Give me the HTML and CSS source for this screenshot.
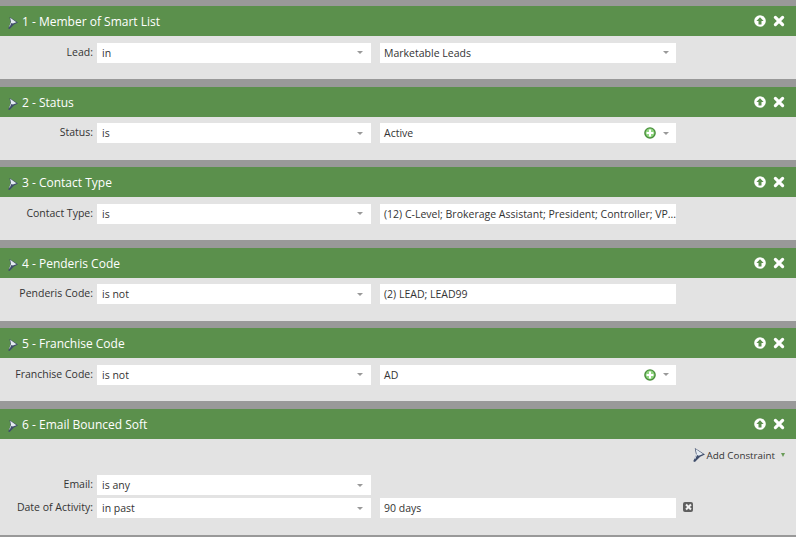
FILE: index.html
```html
<!DOCTYPE html>
<html lang="en">
<head>
    <meta charset="UTF-8">
    <meta name="viewport" content="width=device-width, initial-scale=1.0">
    <title>Smart List Filters</title>
    <link rel="stylesheet" href="styles.css">
</head>
<body>
    <svg class="defs" width="0" height="0">
        <symbol id="wand" viewBox="0 0 10 12" preserveAspectRatio="none">
            <path d="M1.5 0 L10 5.5 L6 7.5 L1.6 12 L0.2 11.4 L2.6 6 Z" fill="#3f4d6b"/>
            <path d="M2.2 0.8 L8.4 5.2 L4.8 6.6 L3.4 6 L1.8 9.6 L1.2 9.4 L3 5 Z" fill="#e4ebf2"/>
        </symbol>
        <symbol id="up" viewBox="0 0 12 12">
            <circle cx="6" cy="6" r="5.8" fill="#fff"/>
            <path d="M6 2.2 L9.6 6 H7.5 V9.6 H4.5 V6 H2.4 Z" fill="#5b904c"/>
        </symbol>
        <symbol id="close" viewBox="0 0 12 12">
            <path d="M2.4 2.4 L9.6 9.6 M9.6 2.4 L2.4 9.6" stroke="#fff" stroke-width="3.2" stroke-linecap="round"/>
        </symbol>
        <symbol id="plus" viewBox="0 0 12 12">
            <circle cx="6" cy="6" r="5.8" fill="#4a8f3c"/>
            <circle cx="6" cy="5.8" r="4.4" fill="#93d883"/>
            <path d="M6 2.6 V9.4 M2.6 6 H9.4" stroke="#fff" stroke-width="2"/>
        </symbol>
    </svg>

    <section class="panel">
        <header class="panel-head">
            <svg class="wand"><use href="#wand"/></svg>
            <span class="panel-title">1 - Member of Smart List</span>
            <svg class="head-icon"><use href="#up"/></svg>
            <svg class="head-icon"><use href="#close"/></svg>
        </header>
        <div class="panel-body">
            <div class="row">
                <label class="row-label">Lead:</label>
                <div class="field op"><span class="value">in</span><i class="arrow"></i></div>
                <div class="field val"><span class="value">Marketable Leads</span><i class="arrow"></i></div>
            </div>
        </div>
    </section>

    <section class="panel">
        <header class="panel-head">
            <svg class="wand"><use href="#wand"/></svg>
            <span class="panel-title">2 - Status</span>
            <svg class="head-icon"><use href="#up"/></svg>
            <svg class="head-icon"><use href="#close"/></svg>
        </header>
        <div class="panel-body">
            <div class="row">
                <label class="row-label">Status:</label>
                <div class="field op"><span class="value">is</span><i class="arrow"></i></div>
                <div class="field val"><span class="value">Active</span><svg class="plus"><use href="#plus"/></svg><i class="arrow"></i></div>
            </div>
        </div>
    </section>

    <section class="panel">
        <header class="panel-head">
            <svg class="wand"><use href="#wand"/></svg>
            <span class="panel-title">3 - Contact Type</span>
            <svg class="head-icon"><use href="#up"/></svg>
            <svg class="head-icon"><use href="#close"/></svg>
        </header>
        <div class="panel-body">
            <div class="row">
                <label class="row-label">Contact Type:</label>
                <div class="field op"><span class="value">is</span><i class="arrow"></i></div>
                <div class="field val"><span class="value">(12) C-Level; Brokerage Assistant; President; Controller; VP...</span></div>
            </div>
        </div>
    </section>

    <section class="panel">
        <header class="panel-head">
            <svg class="wand"><use href="#wand"/></svg>
            <span class="panel-title">4 - Penderis Code</span>
            <svg class="head-icon"><use href="#up"/></svg>
            <svg class="head-icon"><use href="#close"/></svg>
        </header>
        <div class="panel-body">
            <div class="row">
                <label class="row-label">Penderis Code:</label>
                <div class="field op"><span class="value">is not</span><i class="arrow"></i></div>
                <div class="field val"><span class="value">(2) LEAD; LEAD99</span></div>
            </div>
        </div>
    </section>

    <section class="panel">
        <header class="panel-head">
            <svg class="wand"><use href="#wand"/></svg>
            <span class="panel-title">5 - Franchise Code</span>
            <svg class="head-icon"><use href="#up"/></svg>
            <svg class="head-icon"><use href="#close"/></svg>
        </header>
        <div class="panel-body">
            <div class="row">
                <label class="row-label">Franchise Code:</label>
                <div class="field op"><span class="value">is not</span><i class="arrow"></i></div>
                <div class="field val"><span class="value">AD</span><svg class="plus"><use href="#plus"/></svg><i class="arrow"></i></div>
            </div>
        </div>
    </section>

    <section class="panel last">
        <header class="panel-head">
            <svg class="wand"><use href="#wand"/></svg>
            <span class="panel-title">6 - Email Bounced Soft</span>
            <svg class="head-icon"><use href="#up"/></svg>
            <svg class="head-icon"><use href="#close"/></svg>
        </header>
        <div class="panel-body">
            <div class="constraint">
                <svg class="wand-small"><use href="#wand"/></svg>
                <span>Add Constraint</span>
                <i class="arrow-green"></i>
            </div>
            <div class="row">
                <label class="row-label">Email:</label>
                <div class="field op"><span class="value">is any</span><i class="arrow"></i></div>
            </div>
            <div class="row">
                <label class="row-label">Date of Activity:</label>
                <div class="field op"><span class="value">in past</span><i class="arrow"></i></div>
                <div class="field val"><span class="value">90 days</span></div>
                <span class="remove"></span>
            </div>
        </div>
    </section>
</body>
</html>
```

FILE: styles.css
```css
html, body { margin: 0; padding: 0; }
body { width: 796px; height: 537px; overflow: hidden; background: #999; padding-top: 6.4px; box-sizing: border-box;
       font-family: "Open Sans", sans-serif; font-size: 10.5px; color: #333; }
.defs { display: block; height: 0; }

.panel { margin-bottom: 7.5px; }
.panel-head { display: flex; align-items: center; height: 30px; padding: 0 11px 0 8px; background: #5b904c; color: #fff; }
.wand { width: 10px; height: 12px; margin: 4px 4px 0 0; }
.panel-title { flex: 1; padding-top: 0.6px; font-size: 12px; }
.head-icon { width: 12px; height: 12px; margin-left: 7px; }

.panel-body { height: 43px; padding-top: 6.4px; box-sizing: border-box; background: #e3e3e3; }
.last .panel-body { height: 96px; }

.row { display: flex; align-items: center; margin-bottom: 3px; }
.row-label { width: 93px; margin: -2px 4px 0 0; text-align: right; }
.field { display: flex; align-items: center; height: 20px; box-sizing: border-box; background: #fff; }
.field.op { width: 274px; margin-right: 9px; padding: 0 8px 0 5px; }
.field.val { width: 296px; padding: 0 7px 0 4px; }
.value { flex: 1; white-space: nowrap; margin-top: -0.4px; }
.arrow { width: 0; height: 0; border-left: 3px solid transparent; border-right: 3px solid transparent; border-top: 3px solid #999; }
.plus { width: 12px; height: 12px; margin-right: 7px; }

.constraint { display: flex; align-items: center; justify-content: flex-end; height: 14px; margin: 3px 11px 13px 0; font-size: 9.8px; }
.wand-small { width: 12px; height: 14px; margin-right: 2px; }
.arrow-green { width: 0; height: 0; margin-left: 6px; border-left: 2.5px solid transparent; border-right: 2.5px solid transparent; border-top: 4px solid #6a9c58; }
.remove { position: relative; width: 10px; height: 10px; margin: -2px 0 0 7px; border-radius: 2px; background: #5f5f5f; }
.remove::before, .remove::after { content: ""; position: absolute; left: 1.5px; top: 4px; width: 7px; height: 2px; background: #f2f2f2; transform: rotate(45deg); }
.remove::after { transform: rotate(-45deg); }
```
